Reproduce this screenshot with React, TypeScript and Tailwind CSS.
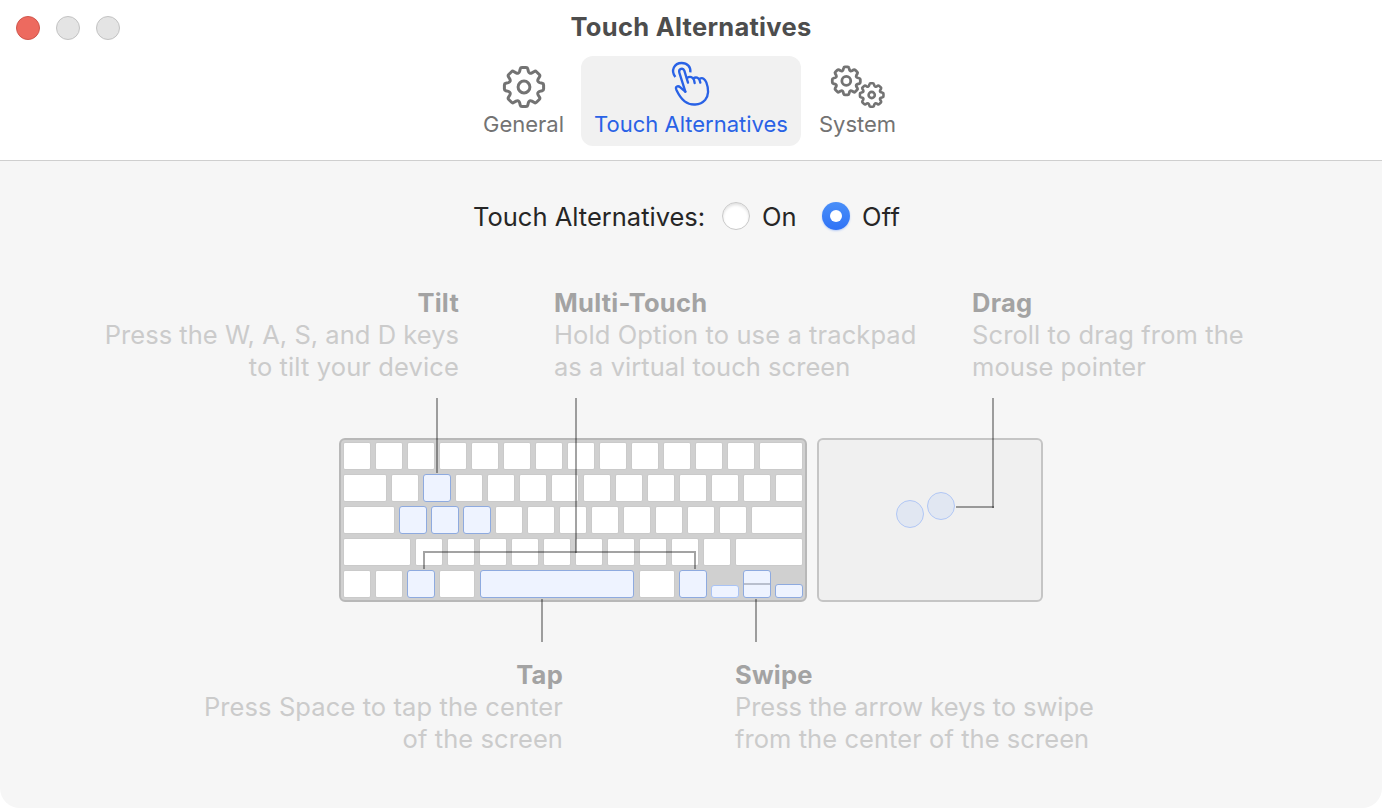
import type { ReactNode } from "react";

type KeyDef = { w: string; active?: boolean };

const k = (w = "w-[28px]", active = false): KeyDef => ({ w, active });
const many = (n: number): KeyDef[] => Array.from({ length: n }, () => k());

const rows: KeyDef[][] = [
  [...many(13), k("w-[44px]")],
  [k("w-[44px]"), k(), k("w-[28px]", true), ...many(11)],
  [
    k("w-[52px]"),
    k("w-[28px]", true),
    k("w-[28px]", true),
    k("w-[28px]", true),
    ...many(8),
    k("w-[52px]"),
  ],
  [k("w-[68px]"), ...many(10), k("w-[68px]")],
];

function Key({ w, active }: KeyDef) {
  return (
    <div
      className={`${w} h-[28px] shrink-0 border ${
        active ? "rounded-[3px] border-[#8eaadf] bg-[#eef3ff]" : "rounded-[2px] border-[#cacaca] bg-white"
      }`}
    />
  );
}

function toothedOutline(): string {
  const rot = (x: number, y: number, deg: number) => {
    const a = (deg * Math.PI) / 180;
    const px = x * Math.cos(a) - y * Math.sin(a);
    const py = x * Math.sin(a) + y * Math.cos(a);
    return `${px.toFixed(2)} ${py.toFixed(2)}`;
  };
  let d = "";
  for (let i = 0; i < 8; i++) {
    const a = i * 45;
    d += i === 0 ? `M${rot(-4.4, -15.6, a)}` : "";
    d += `L${rot(-3.7, -18.3, a)}Q${rot(-3.4, -19.6, a)} ${rot(-2, -19.6, a)}`;
    d += `L${rot(2, -19.6, a)}Q${rot(3.4, -19.6, a)} ${rot(3.7, -18.3, a)}`;
    d += `L${rot(4.4, -15.6, a)}Q${rot(0, -14, a + 22.5)} ${rot(-4.4, -15.6, a + 45)}`;
  }
  return d + "Z";
}

const gear = toothedOutline();

function GearIcon() {
  return (
    <svg width="44" height="44" viewBox="-22 -22 44 44" fill="none" stroke="#737373" strokeWidth="3" strokeLinejoin="round">
      <path d={gear} />
      <circle r="5.9" />
    </svg>
  );
}

function GearsIcon() {
  return (
    <svg width="56" height="44" viewBox="0 0 56 44" fill="none" stroke="#737373" strokeLinejoin="round">
      <g transform="translate(16.3 15.9) scale(0.715)" strokeWidth="3.9">
        <path d={gear} />
        <circle r="6.2" />
      </g>
      <g transform="translate(41.7 30) scale(0.6)" strokeWidth="4.3">
        <path d={gear} />
        <circle r="5.2" />
      </g>
    </svg>
  );
}

function TapIcon() {
  return (
    <svg
      width="44"
      height="48"
      viewBox="57 30 132 144"
      fill="none"
      stroke="#2962e6"
      strokeWidth="7"
      strokeLinecap="round"
      strokeLinejoin="round"
    >
      <path strokeLinecap="butt" d="M76 81C61 61 73 39 95 39C112 39 123 51 121 67" />
      <path d="M106 125L88 68C85 56 99 52 103 62L114 98" />
      <path d="M111 84C120 78 129 81 132 90L134 99" />
      <path d="M130 85C138 80 146 83 149 91L151 98" />
      <path d="M148 87C158 81 165 87 169 97C177 118 177 134 166 149C150 167 122 168 104 154C94 146 86 134 79 119C75 109 84 106 91 112L106 125" />
    </svg>
  );
}

function Callout({ title, children, className }: { title: string; children: ReactNode; className: string }) {
  return (
    <div className={`shrink-0 whitespace-nowrap text-[25.5px] leading-[32px] text-[#cbcbcb] ${className}`}>
      <div className="font-bold tracking-[0.25px] text-[#a3a3a3]">{title}</div>
      {children}
    </div>
  );
}

export default function App() {
  return (
    <div className="h-[808px] w-[1382px] overflow-hidden bg-white font-['Inter','Liberation_Sans',sans-serif]">
      <div className="flex h-[808px] flex-col overflow-hidden rounded-b-[20px] bg-[#f6f6f6]">
        <header className="relative h-[161px] shrink-0 border-b border-[#cfcfcf] bg-white">
          <div className="flex h-[56px] items-start justify-center pt-[11px]">
            <div className="absolute left-4 top-4 flex gap-4">
              <span className="size-6 rounded-full border border-[#d0564c] bg-[#ed6a5f]" />
              <span className="size-6 rounded-full border border-[#c3c3c3] bg-[#e4e4e4]" />
              <span className="size-6 rounded-full border border-[#c3c3c3] bg-[#e4e4e4]" />
            </div>
            <h1 className="text-[25.5px] font-bold leading-[32px] tracking-[0.28px] text-[#4d4d4d]">Touch Alternatives</h1>
          </div>
          <nav className="flex h-[90px] pl-[466px] text-[22px] leading-[26px] text-[#737373]">
            <div className="flex w-[115px] flex-col items-center pt-[9px]">
              <GearIcon />
              <span className="mt-[2px]">General</span>
            </div>
            <div className="flex w-[220px] flex-col items-center rounded-[12px] bg-[#f1f1f1] pt-[4px] text-[#2962e6]">
              <TapIcon />
              <span className="mt-[3px] whitespace-nowrap">Touch Alternatives</span>
            </div>
            <div className="flex w-[113px] flex-col items-center pt-[9px]">
              <GearsIcon />
              <span className="mt-[2px]">System</span>
            </div>
          </nav>
        </header>

        <main className="flex flex-col">
          <div className="mt-[39px] flex h-[32px] items-center pl-[473px] text-[25.5px] leading-[30px] text-[#262626]">
            <span className="w-[249px] whitespace-nowrap pt-[2px]">Touch Alternatives:</span>
            <span className="size-7 rounded-full border border-[#c9c9c9] bg-white shadow-[inset_0_2px_3px_rgba(0,0,0,0.12)]" />
            <span className="ml-3 w-[60px] pt-[2px]">On</span>
            <span className="flex size-7 items-center justify-center rounded-full bg-linear-to-b from-[#4a8ff8] to-[#2f72f6] shadow-[0_1px_2px_rgba(47,114,246,0.3)]">
              <span className="size-3 rounded-full bg-white" />
            </span>
            <span className="ml-3 pt-[2px] tracking-[0.3px]">Off</span>
          </div>

          <div className="mt-[55px] flex">
            <Callout title="Tilt" className="w-[459px] text-right">
              <div className="tracking-[0.03px]">Press the W, A, S, and D keys</div>
              <div className="tracking-[0.12px]">to tilt your device</div>
            </Callout>
            <Callout title="Multi-Touch" className="ml-[95px] w-[418px]">
              <div className="tracking-[0.1px]">Hold Option to use a trackpad</div>
              <div className="tracking-[0.04px]">as a virtual touch screen</div>
            </Callout>
            <Callout title="Drag" className="">
              <div className="tracking-[0.1px]">Scroll to drag from the</div>
              <div className="tracking-[0.07px]">mouse pointer</div>
            </Callout>
          </div>

          <div className="relative mt-[55px] flex gap-[10px] pl-[339px]">
            <div className="flex h-[164px] w-[468px] flex-col gap-1 rounded-[6px] border-2 border-[#b8b8b8] bg-[#d0d0d0] p-[2px]">
              {rows.map((row, i) => (
                <div key={i} className="flex gap-1">
                  {row.map((key, j) => (
                    <Key key={j} {...key} />
                  ))}
                </div>
              ))}
              <div className="flex items-end gap-1">
                <Key w="w-[28px]" />
                <Key w="w-[28px]" />
                <Key w="w-[28px]" active />
                <Key w="w-[36px]" />
                <div className="flex w-[156px] justify-center">
                  <Key w="w-[154px]" active />
                </div>
                <Key w="w-[36px]" />
                <Key w="w-[28px]" active />
                <div className="h-[13px] w-[28px] rounded-[3px] border border-[#a9c3f5] bg-[#eef3ff]" />
                <div className="flex h-[28px] w-[28px] flex-col rounded-[3px] border border-[#8eaadf] bg-[#eef3ff]">
                  <div className="h-[14px] border-b-2 border-[#b9bfcd]" />
                </div>
                <div className="h-[14px] w-[28px] rounded-[3px] border border-[#8eaadf] bg-[#eef3ff]" />
              </div>
            </div>
            <div className="h-[164px] w-[226px] rounded-[6px] border-2 border-[#c5c5c5] bg-[#f0f0f0]" />
            {/* Finger contacts and leader lines over the hardware */}
            <svg className="absolute left-0 top-[-40px]" width="1382" height="244" viewBox="0 398 1382 244" fill="none">
              <circle cx="910" cy="514" r="13.5" fill="#e1e7f2" stroke="#b1c7f5" />
              <circle cx="941" cy="506" r="13.5" fill="#e1e7f2" stroke="#b1c7f5" />
              <g stroke="#000" strokeOpacity="0.36" strokeWidth="2">
                <path d="M437 398V473" />
                <path d="M576 398V553" />
                <path d="M424 569V552H695V569" />
                <path d="M993 398V508" />
                <path d="M956 507H994" />
                <path d="M542 599V642" />
                <path d="M756 599V642" />
              </g>
            </svg>
          </div>

          <div className="mt-[57px] flex">
            <Callout title="Tap" className="w-[563px] text-right">
              <div className="tracking-[0.1px]">Press Space to tap the center</div>
              <div className="tracking-[0.08px]">of the screen</div>
            </Callout>
            <Callout title="Swipe" className="ml-[172px]">
              <div className="tracking-[-0.06px]">Press the arrow keys to swipe</div>
              <div className="tracking-[0.06px]">from the center of the screen</div>
            </Callout>
          </div>
        </main>
      </div>
    </div>
  );
}
